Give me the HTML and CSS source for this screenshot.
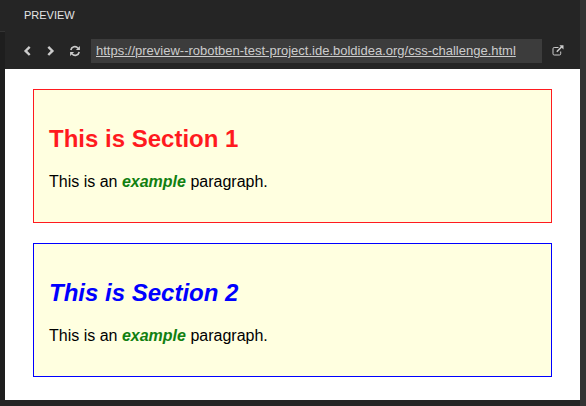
FILE: index.html
```html
<!DOCTYPE html>
<html lang="en">
<head>
<meta charset="utf-8">
<title>Preview</title>
<link rel="stylesheet" href="styles.css">
</head>
<body>
<div class="gutter-left"></div>
<main class="panel">
  <header class="panel-title">PREVIEW</header>
  <nav class="toolbar">
    <svg class="icon back" viewBox="0 0 12 12"><path d="M7.7 1.8 3.6 5.9l4.1 4.1" fill="none" stroke="currentColor" stroke-width="2.4"/></svg>
    <svg class="icon forward" viewBox="0 0 12 12"><path d="m4.3 1.8 4.1 4.1L4.3 10" fill="none" stroke="currentColor" stroke-width="2.4"/></svg>
    <svg class="icon refresh" viewBox="0 0 12 12"><path d="M1.8 5A4.1 4.1 0 0 1 9 3.2M10.2 7A4.1 4.1 0 0 1 3 8.8" fill="none" stroke="currentColor" stroke-width="1.6"/><path d="M10.9 1v4h-4zM1.1 11V7h4z" fill="currentColor"/></svg>
    <div class="address"><a class="url">https://preview--robotben-test-project.ide.boldidea.org/css-challenge.html</a></div>
    <svg class="icon open" viewBox="0 0 12 12"><path d="M6.5 2.5H2.2Q1 2.5 1 3.7v5.1Q1 10 2.2 10h5.3q1.2 0 1.2-1.2V6.5" fill="none" stroke="currentColor" stroke-width="1"/><path d="M4.8 6.7 9.7 1.8" stroke="currentColor" stroke-width="1.6"/><path d="M7.3.2h4.2v4.2z" fill="currentColor"/></svg>
  </nav>
  <div class="page">
    <section class="box first">
      <h2>This is Section 1</h2>
      <p>This is an <em>example</em> paragraph.</p>
    </section>
    <section class="box second">
      <h2>This is Section 2</h2>
      <p>This is an <em>example</em> paragraph.</p>
    </section>
  </div>
</main>
<div class="gutter-right"></div>
</body>
</html>
```
FILE: styles.css
```css
* { box-sizing: border-box; }
body {
  margin: 0;
  height: 406px;
  display: grid;
  grid-template-columns: 5px 575px 6px;
  overflow: hidden;
  background: #252525;
  font-family: "Liberation Sans", Arial, sans-serif;
}
.gutter-left { background: linear-gradient(#252525 31px, #333 31px, #333 32px, #1e1e1e 32px); height: 400px; }
.gutter-right { background: #333; }
.panel { display: flex; flex-direction: column; }
.panel-title {
  height: 39px;
  padding: 9px 0 0 19px;
  color: #e4e4e4;
  font-size: 11px;
  line-height: 13px;
}
.toolbar {
  height: 30px;
  display: flex;
  align-items: flex-start;
  color: #ccc;
}
.icon { width: 12px; height: 12px; margin-top: 6px; flex: none; }
.back { margin-left: 17px; }
.forward { margin-left: 10px; }
.refresh { margin-left: 13px; }
.address {
  width: 451px;
  height: 24px;
  margin-left: 10px;
  padding-left: 5px;
  background: #3c3c3c;
  font-size: 13px;
  line-height: 24px;
  white-space: nowrap;
}
.url { text-decoration: underline; }
.open { margin-left: 10px; }
.page {
  height: 331px;
  padding: 20px 28px;
  background: #fff;
  color: #000;
}
.box {
  height: 134px;
  padding: 15px;
  margin-bottom: 20px;
  border: 1px solid;
  background: #ffffe0;
}
.first { border-color: #ff1a1f; }
.second { border-color: #00f; }
h2 { margin: 20px 0 21px; font-size: 24px; line-height: 27px; }
.first h2 { color: #ff1a1f; }
.second h2 { color: #00f; font-style: italic; }
p { margin: 16px 0; font-size: 16px; line-height: 18px; color: #000; }
em { color: #118011; font-weight: bold; }
```
